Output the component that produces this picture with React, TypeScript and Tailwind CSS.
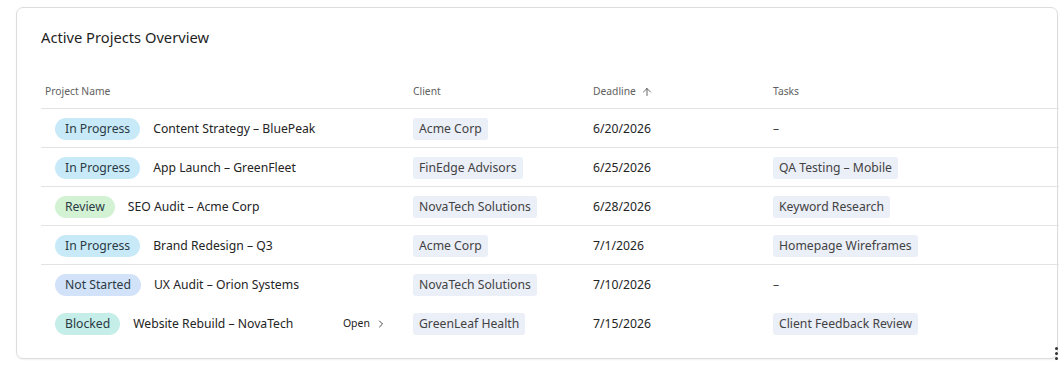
import { ArrowUp, ChevronRight } from 'lucide-react';

type Row = {
  status: string;
  name: string;
  client: string;
  deadline: string;
  task: string | null;
  hovered?: boolean;
};

const statusStyles: Record<string, string> = {
  'In Progress': 'bg-[#c8eaf8]',
  Review: 'bg-[#d3f2d4]',
  'Not Started': 'bg-[#d2e2f8]',
  Blocked: 'bg-[#c5eee8]',
};

const rows: Row[] = [
  { status: 'In Progress', name: 'Content Strategy – BluePeak', client: 'Acme Corp', deadline: '6/20/2026', task: null },
  { status: 'In Progress', name: 'App Launch – GreenFleet', client: 'FinEdge Advisors', deadline: '6/25/2026', task: 'QA Testing – Mobile' },
  { status: 'Review', name: 'SEO Audit – Acme Corp', client: 'NovaTech Solutions', deadline: '6/28/2026', task: 'Keyword Research' },
  { status: 'In Progress', name: 'Brand Redesign – Q3', client: 'Acme Corp', deadline: '7/1/2026', task: 'Homepage Wireframes' },
  { status: 'Not Started', name: 'UX Audit – Orion Systems', client: 'NovaTech Solutions', deadline: '7/10/2026', task: null },
  { status: 'Blocked', name: 'Website Rebuild – NovaTech', client: 'GreenLeaf Health', deadline: '7/15/2026', task: 'Client Feedback Review', hovered: true },
];

const cols = 'grid grid-cols-[368px_180px_180px_300px]';

const Chip = ({ label }: { label: string }) => (
  <span className="inline-flex h-[22px] items-center rounded-[3px] bg-[#ebeff8] px-[6px] text-[12.2px] text-[#424242]">{label}</span>
);

export default function App() {
  return (
    <div className="relative h-[365px] w-[1059px] overflow-hidden bg-white" style={{ fontFamily: '"Noto Sans", "Open Sans", sans-serif' }}>
      <div className="ml-4 mt-[7px] h-[352px] w-[1042px] rounded-[7px] border border-[#dcdcdc] pl-[24px] pt-[19px] shadow-[0_1px_2px_rgba(0,0,0,0.06)]">
        <h2 className="h-5 text-[14.7px] leading-5 text-[#1f1f1f]">Active Projects Overview</h2>

        <div className="mt-[27px] w-[1028px]">
          <div className={`${cols} h-[35px] items-center border-b border-[#e3e3e3] pt-[2px] text-[10.3px] text-[#616161]`}>
            <div className="pl-1">Project Name</div>
            <div className="pl-1">Client</div>
            <div className="flex items-center gap-[5px] pl-1">
              Deadline
              <ArrowUp size={12} strokeWidth={1.5} className="text-[#333]" />
            </div>
            <div className="pl-1">Tasks</div>
          </div>

          {rows.map((row, index) => {
            const last = index === rows.length - 1;
            const beforeHover = rows[index + 1]?.hovered;
            return (
              <div
                key={index}
                className={`${cols} h-[39px] items-center pt-[2px] text-[12.2px] text-[#242424] ${
                  last || beforeHover ? 'border-b border-transparent' : 'border-b border-[#e3e3e3]'
                }`}
              >
                <div className="flex items-center pl-[14px] pr-[22px]">
                  <span className={`inline-flex h-[22px] items-center rounded-full px-[10px] text-[12.2px] text-[#2b3a44] ${statusStyles[row.status]}`}>
                    {row.status}
                  </span>
                  <span className="ml-[13px]">{row.name}</span>
                  {row.hovered && (
                    <span className="ml-auto flex items-center gap-[5px] text-[10.5px] text-[#242424]">
                      Open
                      <ChevronRight size={12} strokeWidth={1.8} className="text-[#333]" />
                    </span>
                  )}
                </div>
                <div className="pl-1">
                  <Chip label={row.client} />
                </div>
                <div className="pl-1">{row.deadline}</div>
                <div className="pl-1">{row.task ? <Chip label={row.task} /> : <span className="text-[#424242]">–</span>}</div>
              </div>
            );
          })}
        </div>
      </div>

      <div className="absolute bottom-[5px] right-[1px] flex flex-col gap-[2px]">
        <span className="h-[3px] w-[3px] rounded-full bg-[#333]" />
        <span className="h-[3px] w-[3px] rounded-full bg-[#333]" />
        <span className="h-[3px] w-[3px] rounded-full bg-[#333]" />
      </div>
    </div>
  );
}
